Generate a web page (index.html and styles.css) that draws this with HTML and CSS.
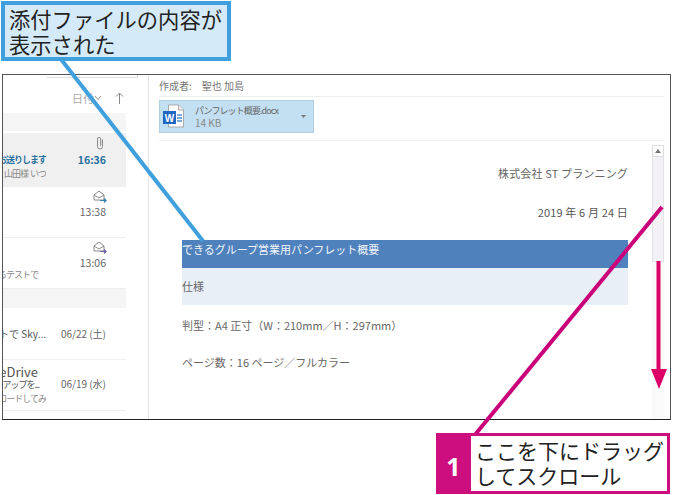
FILE: index.html
```html
<!DOCTYPE html>
<html lang="ja">
<head>
    <title>添付ファイルの内容</title>
    <meta charset="utf-8">
    <link rel="stylesheet" href="styles.css">
</head>
<body>
    <div class="window">
        <div class="list-pane">
            <div class="tab-strip"><div class="tab"></div></div>
            <div class="sort-row">
                <span>日付</span>
                <svg class="chevron" width="8" height="6" viewBox="0 0 8 6"><path d="M1 1l3 3.500L7 1" fill="none" stroke="#999" stroke-width="1"/></svg>
                <svg class="sort-arrow" width="9" height="12" viewBox="0 0 9 12"><path d="M4.500 12V1M1 4.500L4.500 1 8 4.500" fill="none" stroke="#888" stroke-width="1"/></svg>
            </div>
            <div class="group-head"></div>
            <div class="msg selected">
                <div class="msg-text">
                    <div class="line-blank"></div>
                    <div class="subject unread narrow">お送りします</div>
                    <div class="preview narrow">山田様&nbsp;&nbsp;いつ</div>
                </div>
                <div class="msg-meta">
                    <svg class="clip" width="8" height="14" viewBox="0 0 8 14"><path d="M6.500 3.500v7a2.500 2.500 0 0 1-5 0V3a1.600 1.600 0 0 1 3.200 0v7" fill="none" stroke="#8a8a8a" stroke-width="1"/></svg>
                    <div class="time unread">16:36</div>
                </div>
            </div>
            <div class="msg">
                <div class="msg-text"></div>
                <div class="msg-meta">
                    <svg class="env" width="14" height="13" viewBox="0 0 14 13"><path d="M1 5l5-4 5 4v5H1zM1 5l5 3 5-3" fill="none" stroke="#8a8a8a" stroke-width="1"/><path d="M7 10.500h6M11 8.500l2 2-2 2" fill="none" stroke="#2f7fb5" stroke-width="1.200"/></svg>
                    <div class="time">13:38</div>
                </div>
            </div>
            <div class="msg">
                <div class="msg-text">
                    <div class="line-tall"></div>
                    <div class="preview narrow tail">るテストで</div>
                </div>
                <div class="msg-meta">
                    <svg class="env" width="14" height="13" viewBox="0 0 14 13"><path d="M1 5l5-4 5 4v5H1zM1 5l5 3 5-3" fill="none" stroke="#8a8a8a" stroke-width="1"/><path d="M7 10.500h6M11 8.500l2 2-2 2" fill="none" stroke="#6a5fa8" stroke-width="1.200"/></svg>
                    <div class="time">13:06</div>
                </div>
            </div>
            <div class="group-head second"></div>
            <div class="msg">
                <div class="msg-text">
                    <div class="line-mid"></div>
                    <div class="subject">トで Sky...</div>
                </div>
                <div class="msg-meta">
                    <div class="line-mid"></div>
                    <div class="time day">06/22 (土)</div>
                </div>
            </div>
            <div class="msg">
                <div class="msg-text">
                    <div class="sender">eDrive</div>
                    <div class="subject narrow tail">アップを...</div>
                    <div class="preview narrow">ロードしてみ</div>
                </div>
                <div class="msg-meta">
                    <div class="line-mid short"></div>
                    <div class="time day">06/19 (水)</div>
                </div>
            </div>
        </div>
        <div class="read-pane">
            <div class="meta-row"><span>作成者:</span><span class="meta-name">聖也 加島</span></div>
            <div class="attach-row">
                <div class="attach">
                    <svg class="word" width="22" height="25" viewBox="0 0 22 25">
                        <path d="M5.500 1h10l5 5v17h-15z" fill="#fff" stroke="#a9a9a9" stroke-width="1"/>
                        <path d="M15.500 1v5h5" fill="#eee" stroke="#a9a9a9" stroke-width="1"/>
                        <path d="M14 11h5M14 14h5M14 17h5" stroke="#4f8fd0" stroke-width="1.300"/>
                        <rect x="0" y="7" width="13" height="13" fill="#2068c4"/>
                        <text x="6.500" y="17.500" class="word-w">W</text>
                    </svg>
                    <div class="attach-text">
                        <div class="attach-name">パンフレット概要.docx</div>
                        <div class="attach-size">14 KB</div>
                    </div>
                    <svg class="attach-drop" width="5" height="3" viewBox="0 0 5 3"><path d="M0 0h5L2.500 3z" fill="#777"/></svg>
                </div>
            </div>
            <div class="doc-wrap">
                <div class="doc">
                    <p class="right first">株式会社 ST プランニング</p>
                    <p class="right date">2019 年 6 月 24 日</p>
                    <div class="band-dark">できるグループ営業用パンフレット概要</div>
                    <div class="band-light">仕様</div>
                    <p class="spec">判型：A4 正寸（W：210mm／H：297mm）</p>
                    <p class="spec next">ページ数：16 ページ／フルカラー</p>
                </div>
                <div class="scrollbar">
                    <div class="scroll-up"><svg width="6" height="4" viewBox="0 0 6 4"><path d="M0 4l3-4 3 4z" fill="#777"/></svg></div>
                    <div class="scroll-thumb"></div>
                    <div class="scroll-rest"></div>
                </div>
            </div>
        </div>
    </div>

    <svg class="leaders" width="681" height="495" viewBox="0 0 681 495">
        <path d="M60 58L203 241" fill="none" stroke="#3fa0dd" stroke-width="4"/>
        <path d="M662 207L474 436" fill="none" stroke="#c9007a" stroke-width="4"/>
        <path d="M658.500 261V372" fill="none" stroke="#dd0066" stroke-width="4"/>
        <path d="M651 369h16l-8 20z" fill="#dd0066"/>
    </svg>

    <div class="callout-blue">添付ファイルの内容が<br>表示された</div>
    <div class="callout-pink">
        <div class="step-num">1</div>
        <div class="step-text">ここを下にドラッグ<br>してスクロール</div>
    </div>
</body>
</html>
```

FILE: styles.css
```css
body {
    margin: 0px;
    background-color: #fff;
    font-family: "Noto Sans CJK JP", "Noto Sans", sans-serif;
    color: #666;
}
.window {
    display: flex;
    box-sizing: border-box;
    width: 669px;
    height: 346px;
    margin: 74px 0 0 2px;
    border: 1px solid #555;
    border-bottom-color: #222;
}

/* left list */
.list-pane {
    box-sizing: border-box;
    width: 146px;
    border-right: 1px solid #e6e6e6;
    overflow: hidden;
}
.tab-strip {
    height: 3px;
    display: flex;
    justify-content: flex-end;
    padding-right: 10px;
}
.tab {
    width: 90px;
    border-bottom: 1px solid #ddd;
    border-right: 1px solid #ddd;
}
.sort-row {
    box-sizing: border-box;
    height: 35px;
    display: flex;
    align-items: center;
    padding: 4px 0 0 69px;
    font-size: 11px;
    color: #aaa;
}
.sort-arrow {
    margin-left: 13px;
}
.group-head {
    width: 123px;
    height: 18px;
    background: #f5f5f5;
    margin-bottom: 2px;
}
.group-head.second {
    height: 19px;
    margin-bottom: 1px;
}
.msg {
    box-sizing: border-box;
    display: flex;
    width: 123px;
    height: 51px;
    border-bottom: 1px solid #efefef;
    overflow: hidden;
}
.msg.selected {
    height: 54px;
    background: #f0f0f0;
    border-bottom: 0;
}
.msg-text {
    width: 43px;
    flex-shrink: 0;
    overflow: hidden;
    display: flex;
    flex-direction: column;
    align-items: flex-end;
    white-space: nowrap;
}
.msg-meta {
    flex: 1;
    padding-right: 20px;
    display: flex;
    flex-direction: column;
    align-items: flex-end;
}
.line-blank {
    height: 19px;
    flex-shrink: 0;
}
.line-mid {
    height: 17px;
    flex-shrink: 0;
}
.line-mid.short {
    height: 16px;
}
.line-tall {
    height: 30px;
    flex-shrink: 0;
}
.subject {
    font-size: 10px;
    line-height: 15px;
    color: #555;
}
.subject.unread {
    color: #2a6f9e;
    font-weight: 700;
}
.subject.tail {
    margin-right: 7px;
    line-height: 14px;
}
.preview {
    font-size: 9px;
    line-height: 14px;
    color: #888;
}
.preview.tail {
    margin-right: 8px;
}
.narrow {
    font-size: 9px;
    letter-spacing: -1px;
}
.sender {
    font-size: 13px;
    line-height: 13px;
    margin: 5px 8px 0 0;
    color: #555;
}
.time {
    font-size: 10.500px;
    line-height: 15px;
    color: #666;
    white-space: nowrap;
}
.time.unread {
    color: #2a6f9e;
    font-weight: 700;
}
.time.day {
    font-size: 10px;
}
.clip {
    margin: 3px 2px 2px 0;
}
.env {
    margin: 3px -1px 1px 0;
    flex-shrink: 0;
}

/* reading pane */
.read-pane {
    flex: 1;
    box-sizing: border-box;
    padding: 0 6px 0 10px;
    display: flex;
    flex-direction: column;
    min-width: 0;
}
.meta-row {
    box-sizing: border-box;
    height: 22px;
    font-size: 10px;
    line-height: 21px;
    color: #777;
    border-bottom: 1px solid #eee;
}
.meta-name {
    margin-left: 10px;
}
.attach-row {
    box-sizing: border-box;
    height: 44px;
    padding-top: 3px;
    border-bottom: 1px solid #eee;
}
.attach {
    box-sizing: border-box;
    width: 155px;
    height: 33px;
    display: flex;
    align-items: center;
    background: #c3dff2;
    border: 1px solid #b0cfe4;
    padding-left: 3px;
}
.word {
    flex-shrink: 0;
}
.word-w {
    font-family: "Liberation Sans", sans-serif;
    font-size: 10px;
    font-weight: 700;
    fill: #fff;
    text-anchor: middle;
}
.attach-text {
    margin-left: 10px;
    width: 98px;
}
.attach-name {
    font-size: 9px;
    line-height: 12px;
    letter-spacing: -0.900px;
    color: #666;
    white-space: nowrap;
}
.attach-size {
    font-size: 10px;
    line-height: 12px;
    color: #888;
}
.attach-drop {
    margin-left: 8px;
}
.doc-wrap {
    flex: 1;
    display: flex;
    min-height: 0;
}
.doc {
    flex: 1;
    padding: 23px 24px 0 23px;
    font-size: 11px;
    line-height: 18px;
    color: #666;
}
.doc p {
    margin: 0;
}
.doc .right {
    text-align: right;
    letter-spacing: 0.150px;
}
.doc .date {
    margin-top: 21px;
    margin-bottom: 19px;
    color: #555;
}
.band-dark {
    height: 28px;
    background: #4f81bd;
    color: #f2f6fb;
}
.band-light {
    box-sizing: border-box;
    height: 37px;
    padding-top: 9px;
    background: #e9eff7;
}
.doc .spec {
    margin-top: 11px;
}
.doc .next {
    margin-top: 19px;
}
.scrollbar {
    width: 12px;
    flex-shrink: 0;
    margin-top: 4px;
    display: flex;
    flex-direction: column;
}
.scroll-up {
    box-sizing: border-box;
    height: 12px;
    border: 1px solid #ddd;
    display: flex;
    align-items: center;
    justify-content: center;
    background: #fff;
}
.scroll-thumb {
    height: 105px;
    background: #f3f1f5;
    border: 1px solid #e4e4e4;
    border-top: 0;
    box-sizing: border-box;
}
.scroll-rest {
    flex: 1;
    background: #fbfafb;
}

/* annotations over the screenshot */
.leaders {
    position: absolute;
    left: 0;
    top: 0;
}
.callout-blue {
    position: absolute;
    left: 1px;
    top: 1px;
    box-sizing: border-box;
    width: 230px;
    height: 60px;
    padding: 1px 0 0 4px;
    border: 4px solid #3fa0dd;
    background: #d5eaf8;
    color: #222;
    font-size: 21.300px;
    line-height: 25px;
    white-space: nowrap;
}
.callout-pink {
    position: absolute;
    left: 436px;
    top: 433px;
    box-sizing: border-box;
    width: 234px;
    height: 61px;
    display: flex;
    border: 3px solid #cc0e7f;
    border-left: 0;
    background: #cc0e7f;
}
.step-num {
    width: 35px;
    color: #fff;
    font-size: 25px;
    font-weight: 700;
    text-align: center;
    line-height: 60px;
    font-family: "Noto Sans", sans-serif;
}
.step-text {
    flex: 1;
    background: #fff;
    color: #222;
    padding: 2px 0 0 4px;
    font-size: 21px;
    line-height: 25px;
    white-space: nowrap;
}
```
